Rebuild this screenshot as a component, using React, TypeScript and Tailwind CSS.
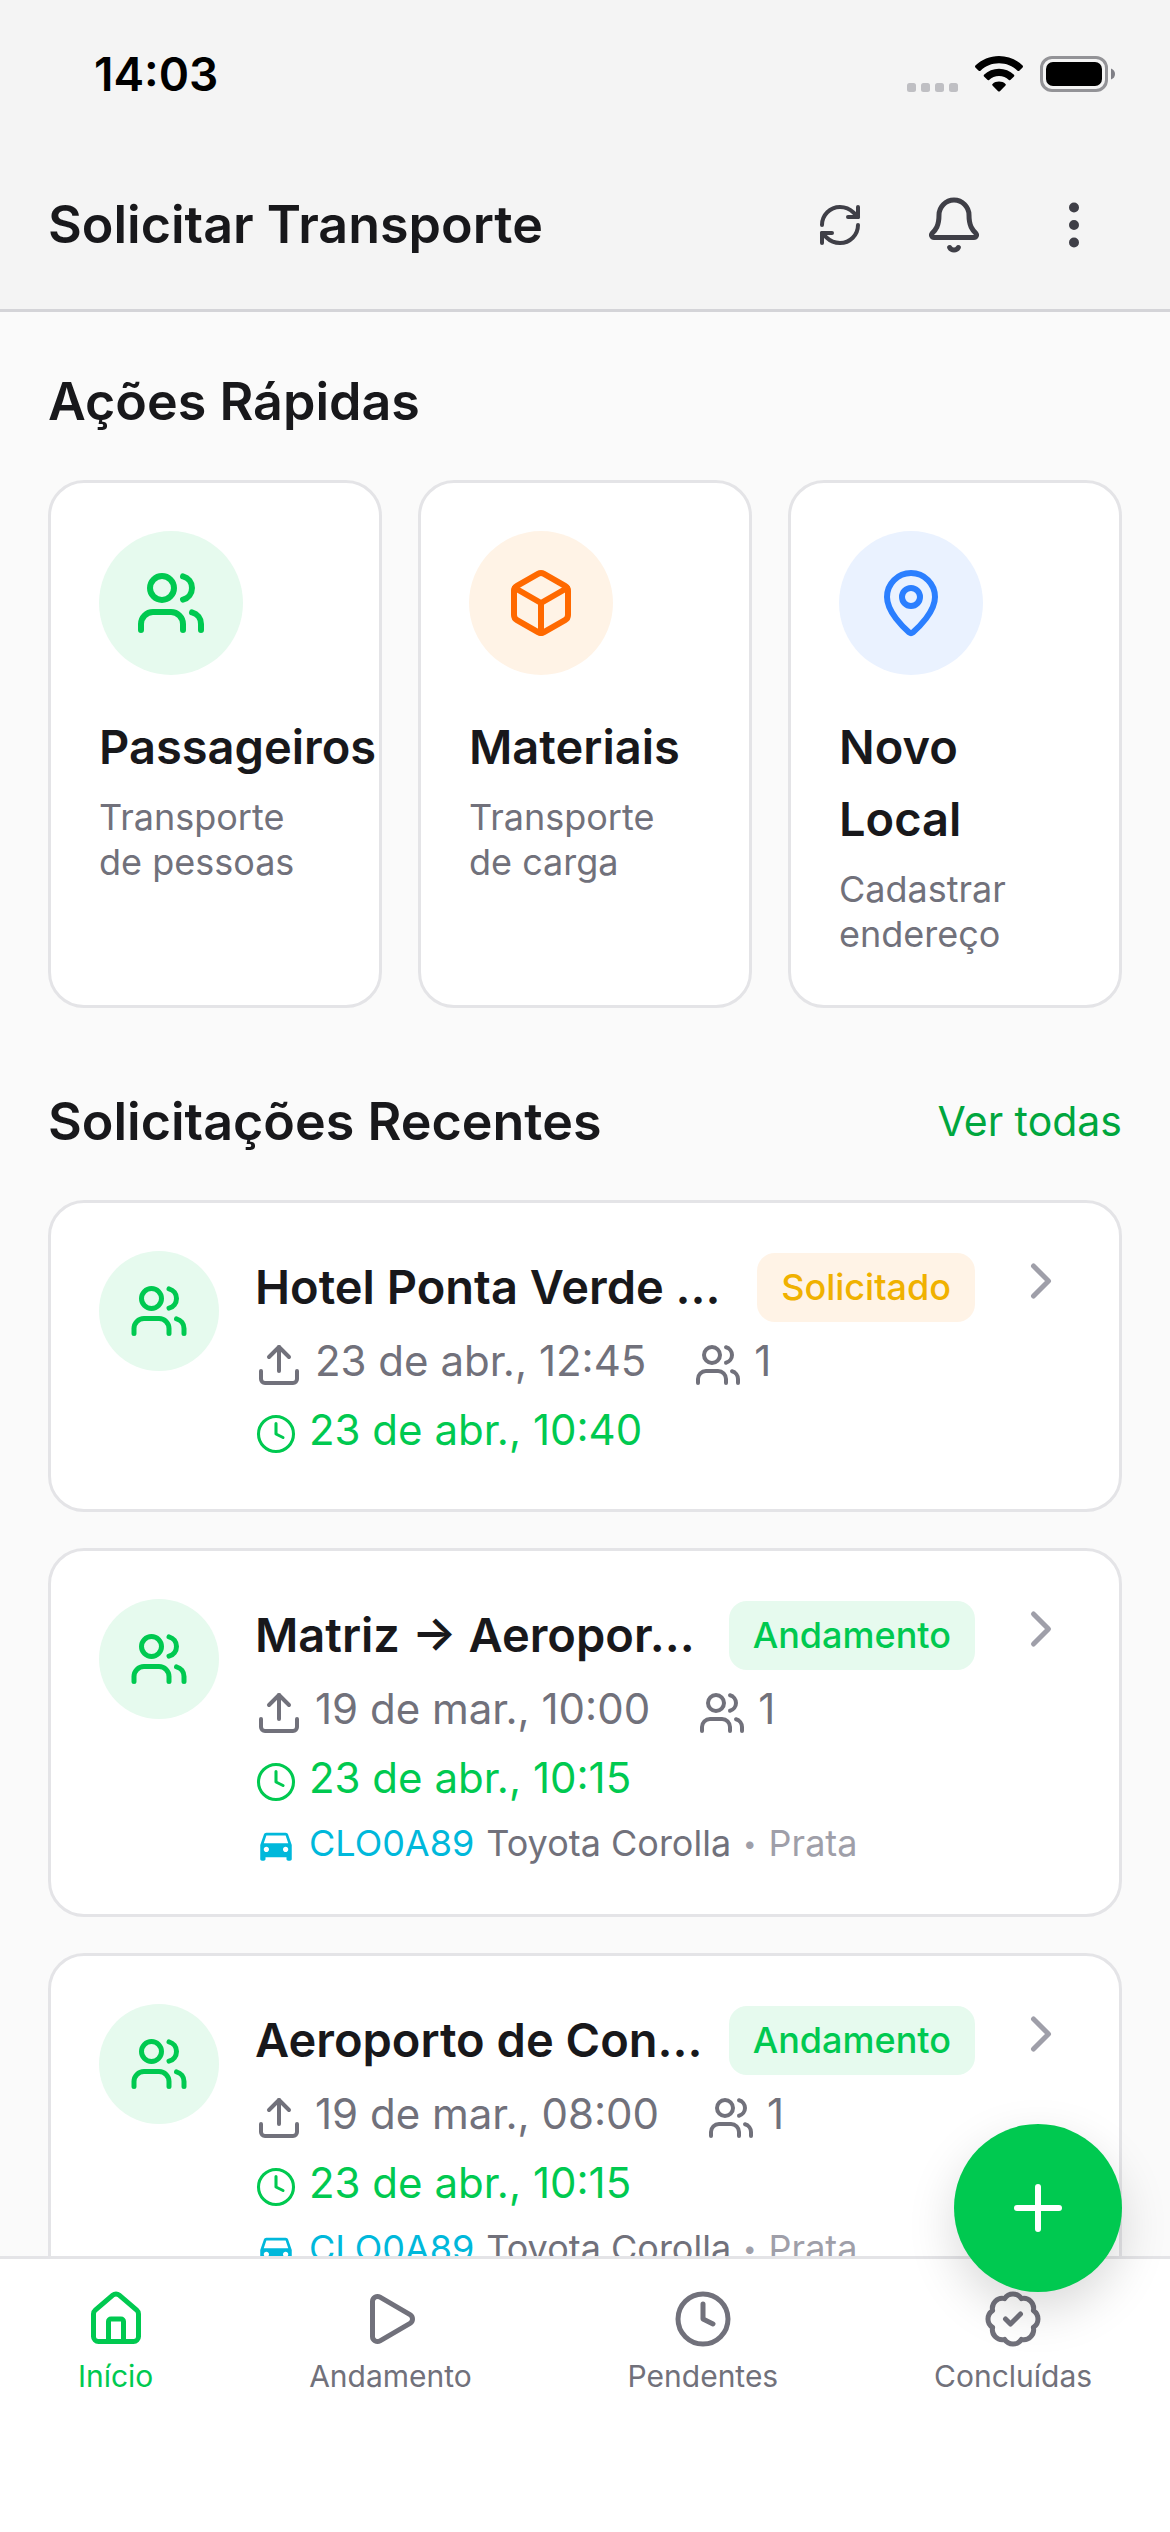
import React from "react";
import {
    BadgeCheck,
    Bell,
    Box,
    ChevronRight,
    Clock,
    EllipsisVertical,
    House,
    MapPin,
    Play,
    Plus,
    RefreshCw,
    Upload,
    Users,
} from "lucide-react";
import { MdDirectionsCar } from "react-icons/md";

const ACTIONS = [
    {
        title: "Passageiros",
        lines: ["Transporte", "de pessoas"],
        icon: Users,
        tone: "bg-[#e6faee] text-[#00c950]",
    },
    {
        title: "Materiais",
        lines: ["Transporte", "de carga"],
        icon: Box,
        tone: "bg-[#fff3e6] text-[#ff6900]",
    },
    {
        title: "Novo Local",
        lines: ["Cadastrar", "endereço"],
        icon: MapPin,
        tone: "bg-[#eaf2ff] text-[#2b7fff]",
    },
];

const CAR = { plate: "CLO0A89", model: "Toyota Corolla", color: "Prata" };

const REQUESTS = [
    {
        title: "Hotel Ponta Verde ...",
        status: "Solicitado",
        date: "23 de abr., 12:45",
        people: 1,
        updated: "23 de abr., 10:40",
        car: null,
    },
    {
        title: "Matriz → Aeropor...",
        status: "Andamento",
        date: "19 de mar., 10:00",
        people: 1,
        updated: "23 de abr., 10:15",
        car: CAR,
    },
    {
        title: "Aeroporto de Con...",
        status: "Andamento",
        date: "19 de mar., 08:00",
        people: 1,
        updated: "23 de abr., 10:15",
        car: CAR,
    },
];

const STATUS_TONES: Record<string, string> = {
    Solicitado: "bg-[#fff3e6] text-[#f0b100]",
    Andamento: "bg-[#e6faee] text-[#00c950]",
};

const TABS = [
    { label: "Início", icon: House, active: true },
    { label: "Andamento", icon: Play, active: false },
    { label: "Pendentes", icon: Clock, active: false },
    { label: "Concluídas", icon: BadgeCheck, active: false },
];

export default function App() {
    return (
        <div className="relative flex h-screen flex-col overflow-hidden bg-[#fafafa] font-['Inter',sans-serif] text-zinc-900">
            <header className="shrink-0 border-b-3 border-zinc-300 bg-[#f4f4f4]">
                <StatusBar />
                <div className="flex items-center justify-between py-9 pr-[66px] pl-12">
                    <h1 className="text-[52px] leading-[96px] font-semibold">Solicitar Transporte</h1>
                    <div className="flex items-center text-zinc-700">
                        <button aria-label="Atualizar">
                            <RefreshCw className="size-12" />
                        </button>
                        <button aria-label="Notificações" className="ml-15">
                            <Bell className="size-15" />
                        </button>
                        <button aria-label="Mais opções" className="ml-15">
                            <EllipsisVertical className="size-15" />
                        </button>
                    </div>
                </div>
            </header>

            <main className="min-h-0 flex-1 overflow-y-auto px-12 pt-12 [scrollbar-width:none]">
                <h2 className="text-[52px] leading-[84px] font-semibold">Ações Rápidas</h2>
                <div className="mt-9 grid grid-cols-3 gap-9">
                    {ACTIONS.map((action) => (
                        <ActionCard key={action.title} action={action} />
                    ))}
                </div>

                <div className="mt-18 flex items-center justify-between">
                    <h2 className="text-[52px] leading-[84px] font-semibold">Solicitações Recentes</h2>
                    <a href="#todas" className="text-[41px] text-[#00a63e]">
                        Ver todas
                    </a>
                </div>
                <div className="mt-9 flex flex-col gap-9 pb-12">
                    {REQUESTS.map((request) => (
                        <RequestCard key={request.title} request={request} />
                    ))}
                </div>
            </main>

            <nav className="flex shrink-0 justify-around border-t-3 border-zinc-200 bg-white pt-[30px] pb-[135px]">
                {TABS.map(({ label, icon: Icon, active }) => (
                    <a
                        key={label}
                        href={`#${label}`}
                        className={`flex flex-col items-center gap-1.5 ${active ? "text-[#00c950]" : "text-zinc-500"}`}
                    >
                        <Icon className="size-15" />
                        <span className="text-[30px] leading-[42px]">{label}</span>
                    </a>
                ))}
            </nav>

            {/* Floating action button */}
            <button
                aria-label="Nova solicitação"
                className="absolute right-12 bottom-60 flex size-42 items-center justify-center rounded-full bg-[#00c950] text-white shadow-[0_18px_48px_rgba(0,0,0,0.15)]"
            >
                <Plus className="size-18" />
            </button>
        </div>
    );
}

function StatusBar() {
    return (
        <div className="flex items-center justify-between pt-11 pr-[55px] pb-[37px] pl-[94px] text-black">
            <span className="text-[46px] leading-[60px] font-semibold">14:03</span>
            <div className="flex items-center">
                <svg className="h-9 w-[51px]" viewBox="0 0 51 36" fill="#bfbfc3">
                    <rect x="0" y="27" width="9" height="9" rx="2.5" />
                    <rect x="14" y="27" width="9" height="9" rx="2.5" />
                    <rect x="28" y="27" width="9" height="9" rx="2.5" />
                    <rect x="42" y="27" width="9" height="9" rx="2.5" />
                </svg>
                <svg className="ml-[17px] h-9 w-12" viewBox="0 0 48 36">
                    <path d="M24 0C33 0 41.500 3.600 47.600 9.600Q48.400 10.500 47.600 11.400L44.300 14.700Q43.400 15.500 42.500 14.700C37.600 10 31.100 7.300 24 7.300S10.400 10 5.500 14.700Q4.600 15.500 3.700 14.700L.4 11.400Q-.4 10.500.4 9.600C6.500 3.600 15 0 24 0Z" />
                    <path d="M24 12.800C29.700 12.800 35 15 39 18.700Q39.800 19.600 39 20.500L35.600 23.800Q34.800 24.600 33.900 23.900C31.200 21.500 27.800 20.100 24 20.100S16.800 21.500 14.100 23.900Q13.200 24.600 12.400 23.800L9 20.500Q8.200 19.600 9 18.700C13 15 18.300 12.800 24 12.800Z" />
                    <path d="M24 25.600C26.500 25.600 28.700 26.400 30.500 27.900Q31.300 28.700 30.500 29.500L24.900 35.200Q24 36 23.100 35.200L17.500 29.500Q16.700 28.700 17.500 27.900C19.300 26.400 21.500 25.600 24 25.600Z" />
                </svg>
                <svg className="ml-[17px] h-9 w-[75px]" viewBox="0 0 75 36">
                    <rect x="1.500" y="1.500" width="65" height="33" rx="10.500" fill="none" stroke="#939397" strokeWidth="3" />
                    <rect x="6" y="6" width="56" height="24" rx="7" />
                    <path d="M71 12.500Q75 14 75 18T71 23.500Z" fill="#7f7f86" />
                </svg>
            </div>
        </div>
    );
}

function ActionCard({ action }: { action: (typeof ACTIONS)[0] }) {
    const Icon = action.icon;
    return (
        <button className="flex min-w-0 flex-col items-start rounded-[36px] border-3 border-zinc-200 bg-white p-12 text-left">
            <span className={`flex size-36 items-center justify-center rounded-full ${action.tone}`}>
                <Icon className="size-18" />
            </span>
            <span className="mt-9 text-[47px] leading-[72px] font-semibold">{action.title}</span>
            <span className="mt-3 text-[36px] leading-[45px] text-zinc-500">
                {action.lines[0]}
                <br />
                {action.lines[1]}
            </span>
        </button>
    );
}

function RequestCard({ request }: { request: (typeof REQUESTS)[0] }) {
    return (
        <article className="flex items-start gap-9 rounded-[36px] border-3 border-zinc-200 bg-white p-12">
            <span className="flex size-30 shrink-0 items-center justify-center rounded-full bg-[#e6faee] text-[#00c950]">
                <Users className="size-15" />
            </span>

            <div className="min-w-0 flex-1">
                <div className="flex items-center justify-between gap-6">
                    <h3 className="truncate text-[47px] leading-[72px] font-semibold">{request.title}</h3>
                    <span
                        className={`shrink-0 rounded-[18px] px-6 py-3 text-[36px] leading-[45px] font-medium ${STATUS_TONES[request.status]}`}
                    >
                        {request.status}
                    </span>
                </div>

                <div className="mt-1.5 flex items-center text-[42px] leading-[63px] text-zinc-500">
                    <Upload className="mt-2 size-12" />
                    <span className="ml-3">{request.date}</span>
                    <Users className="mt-2 ml-12 size-12" />
                    <span className="ml-3">{request.people}</span>
                </div>

                <div className="mt-1.5 flex items-center gap-3 text-[42px] leading-[63px] text-[#00c950]">
                    <Clock className="mt-2 size-[42px]" strokeWidth={1.75} />
                    <span>{request.updated}</span>
                </div>

                {request.car && (
                    <div className="mt-3 flex items-center gap-3 text-[36px] leading-[45px] text-zinc-500">
                        <MdDirectionsCar className="mt-[3px] size-[42px] text-[#00b8db]" />
                        <span className="text-[#00b8db]">{request.car.plate}</span>
                        <span>{request.car.model}</span>
                        <span className="text-2xl text-zinc-400">•</span>
                        <span className="text-zinc-400">{request.car.color}</span>
                    </div>
                )}
            </div>

            <ChevronRight className="size-15 shrink-0 text-zinc-400" />
        </article>
    );
}
